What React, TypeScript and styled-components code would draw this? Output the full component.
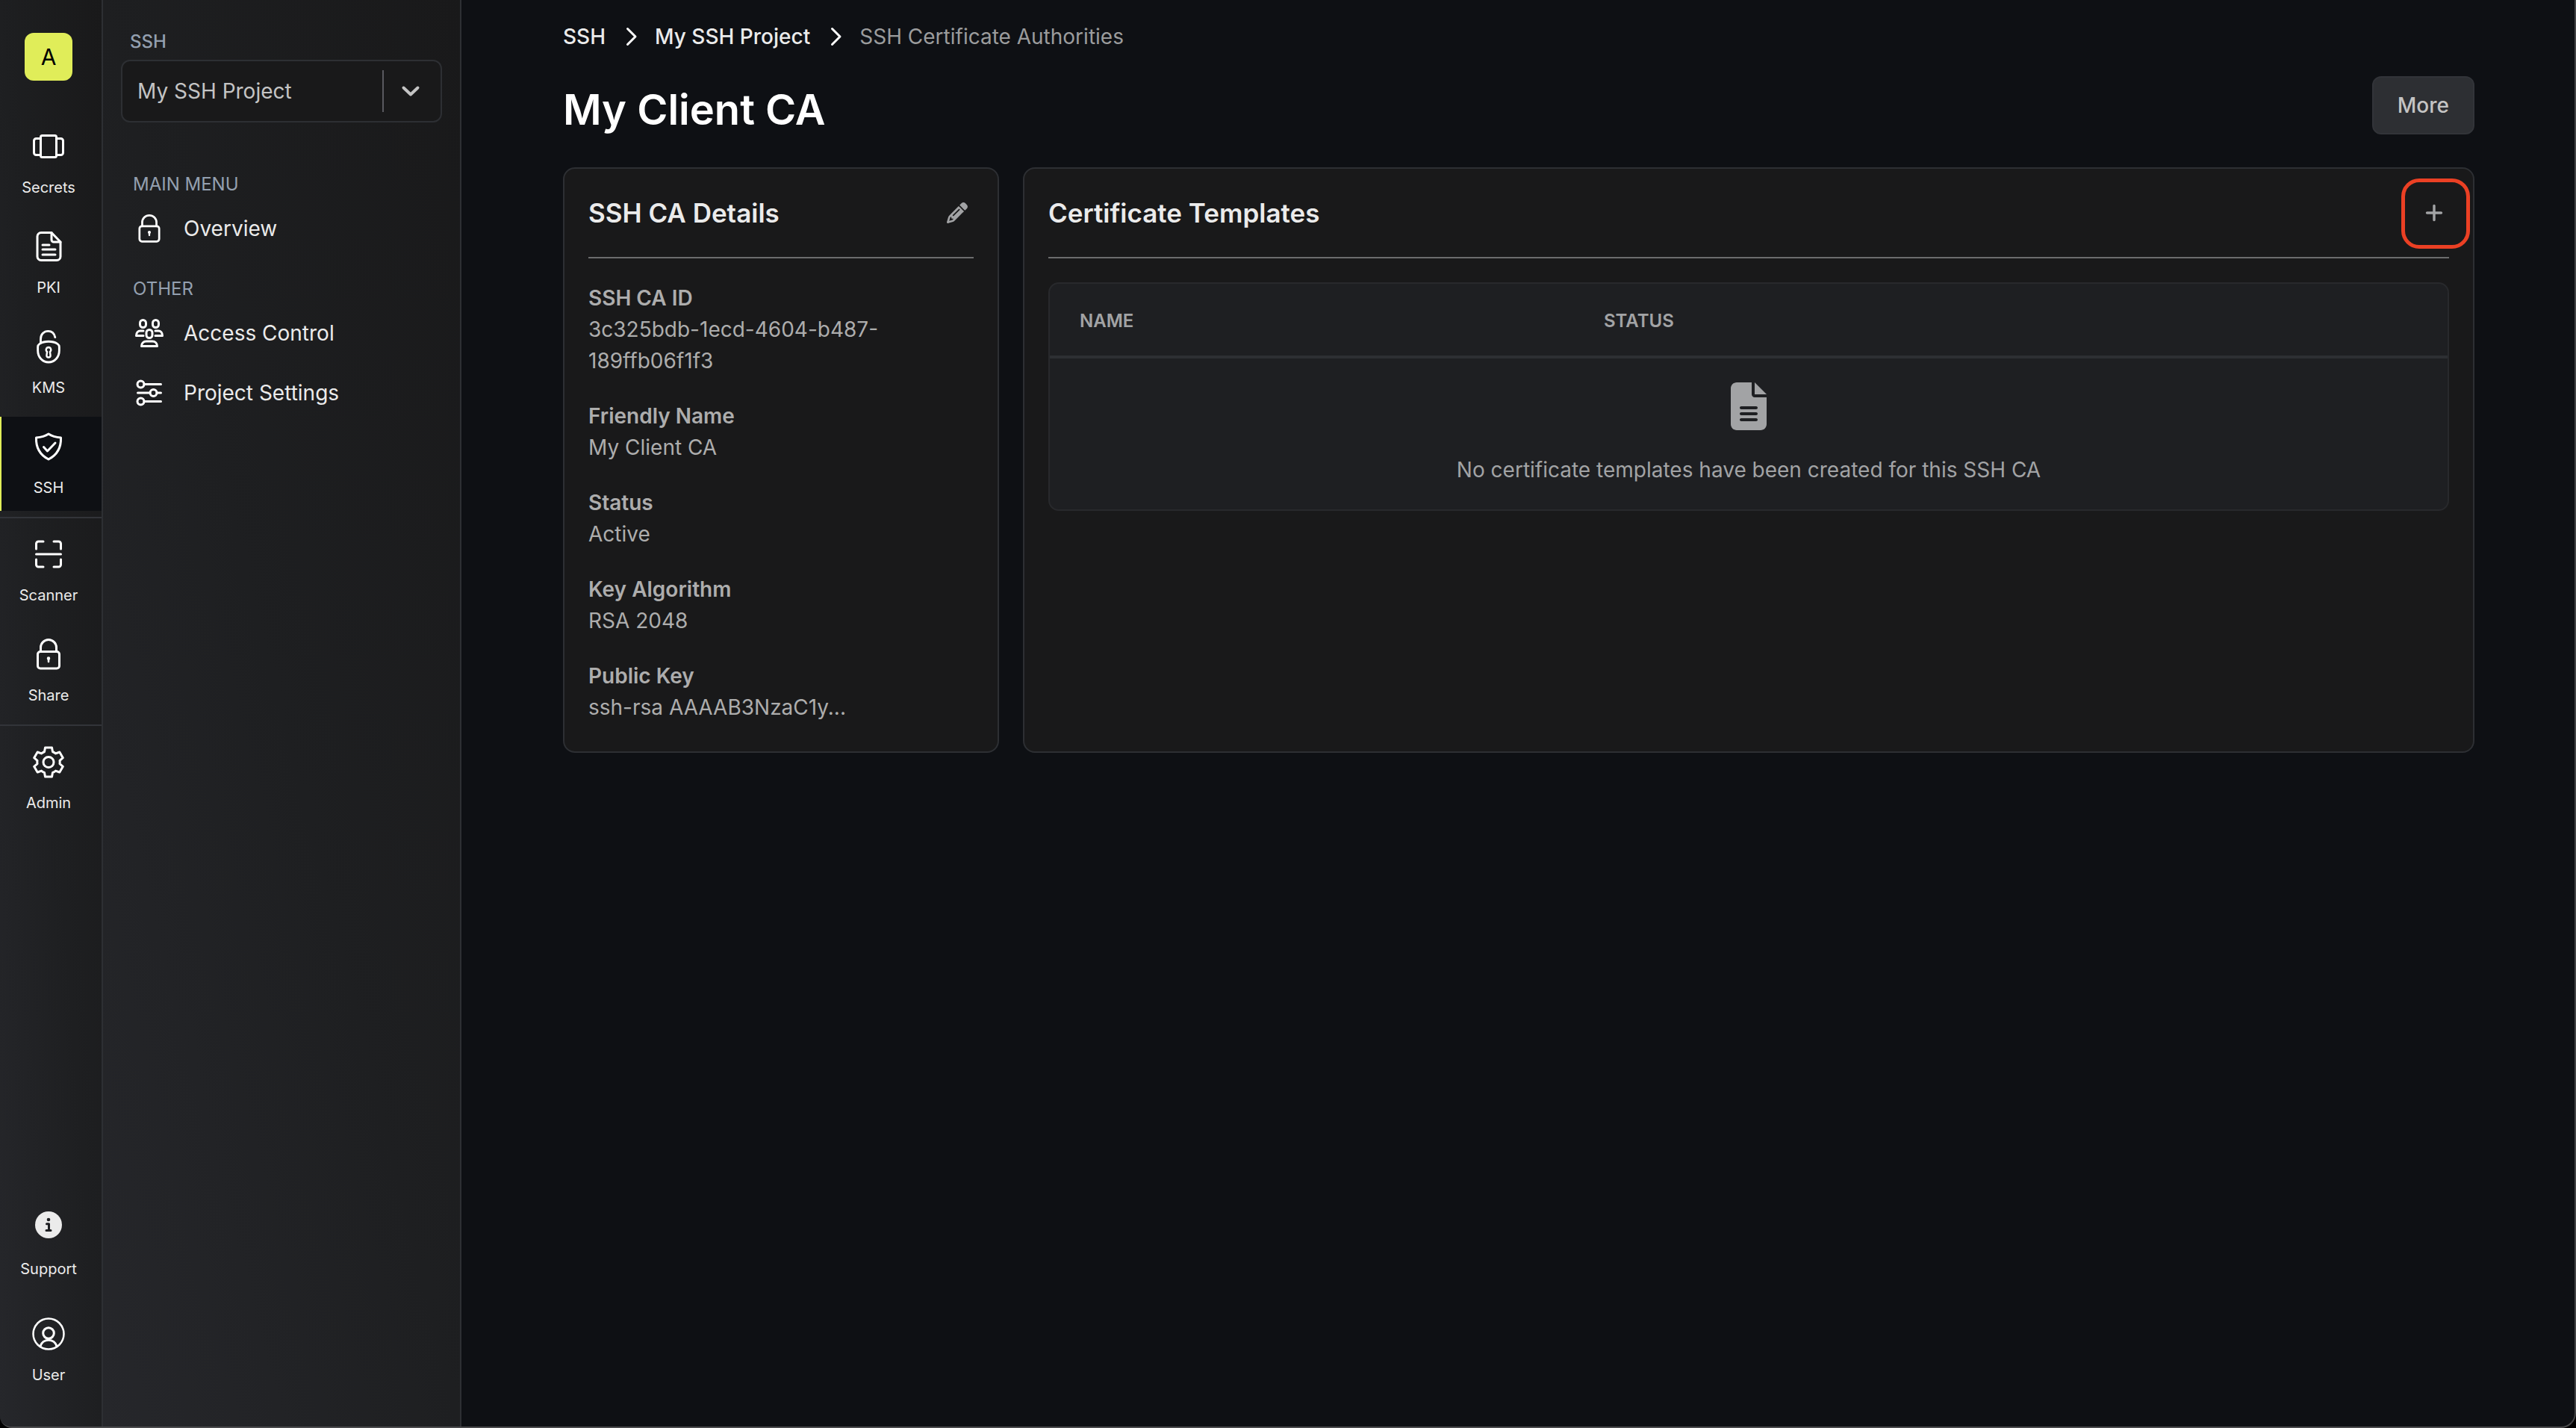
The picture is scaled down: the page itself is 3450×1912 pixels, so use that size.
import React from "react";
import styled, { createGlobalStyle, css } from "styled-components";
import { FaPencil, FaPlus, FaFileLines } from "react-icons/fa6";

const color = {
  page: "#0e1014",
  panel: "#19191a",
  table: "#1e1f22",
  line: "#2d2f33",
  rule: "#6b6c6d",
  text: "#ebebeb",
  soft: "#c4c4c4",
  muted: "#adadad",
  dim: "#a2a3a5",
  slate: "#94a0b0",
  lime: "#e0ed59",
  alert: "#eb4024",
};

const GlobalStyle = createGlobalStyle`
  *, *::before, *::after { box-sizing: border-box; }
  html { background: #000; }
  body {
    margin: 0;
    font-family: Inter, "Liberation Sans", sans-serif;
    font-size: 28px;
    line-height: 42px;
    color: ${color.text};
    -webkit-font-smoothing: antialiased;
  }
  h1, h2, dl, dd, ul, ol, p { margin: 0; padding: 0; }
  ul, ol { list-style: none; }
  button, select { font: inherit; color: inherit; }
  a { color: inherit; text-decoration: none; }
`;

const Window = styled.div`
  display: flex;
  min-height: 100vh;
  overflow: hidden;
  background: ${color.page};
  border-right: 2px solid #434345;
  border-bottom: 2px solid #4b4b4d;
  border-radius: 0 0 20px 16px;
`;

const gradient = css`
  background: linear-gradient(to top right, #26272b, #1e1f21 50%, #19191a);
`;

const Rail = styled.nav`
  ${gradient}
  flex: none;
  display: flex;
  flex-direction: column;
  gap: 8px;
  width: 138px;
  padding: 44px 0 38px;
  border-right: 2px solid ${color.line};
`;

const OrgBadge = styled.button`
  display: flex;
  align-items: center;
  justify-content: center;
  align-self: center;
  width: 64px;
  height: 64px;
  margin: 0 6px 40px 0;
  padding: 0;
  border: 0;
  border-radius: 12px;
  background: ${color.lime};
  color: #000;
  font-size: 30px;
`;

const RailItem = styled.a<{ $active?: boolean }>`
  display: flex;
  flex-direction: column;
  align-items: center;
  gap: 18px;
  height: 126px;
  padding: 18px 8px 0 0;
  font-size: 20px;
  line-height: 30px;
  border-left: 2px solid ${(p) => (p.$active ? color.lime : "transparent")};
  background: ${(p) => (p.$active ? color.page : "transparent")};
`;

const RailRule = styled.div`
  height: 2px;
  background: #323439;
`;

const RailSpacer = styled.div`
  flex: 1;
`;

const RailFooter = styled.div`
  display: flex;
  flex-direction: column;
  gap: 16px;
`;

const Icon = styled.svg<{ $size: number }>`
  flex: none;
  width: ${(p) => p.$size}px;
  height: ${(p) => p.$size}px;
  overflow: visible;
  fill: none;
  stroke: #fff;
  stroke-width: 3;
  stroke-linecap: round;
  stroke-linejoin: round;
`;

const Sidebar = styled.aside`
  ${gradient}
  flex: none;
  width: 480px;
  padding: 38px 24px;
  border-right: 2px solid ${color.line};
`;

const ProductLabel = styled.label`
  display: block;
  padding: 0 12px 6px;
  font-size: 24px;
  line-height: 36px;
  font-weight: 500;
  color: ${color.slate};
`;

const SelectBox = styled.div`
  display: flex;
  align-items: center;
  height: 84px;
  padding-right: 28px;
  border: 2px solid ${color.line};
  border-radius: 12px;
  background: ${color.panel};
`;

const Select = styled.select`
  flex: 1;
  min-width: 0;
  height: 100%;
  padding: 0 0 0 20px;
  border: 0;
  background: transparent;
  color: ${color.soft};
  appearance: none;
`;

const SelectRule = styled.span`
  width: 2px;
  height: 56px;
  margin-right: 24px;
  background: #59595f;
`;

const MenuTitle = styled.h2`
  height: 40px;
  padding-left: 16px;
  font-size: 24px;
  font-weight: 400;
  line-height: 42px;
  color: ${color.slate};
`;

const MenuGroup = styled.section`
  padding-top: 20px;

  &:first-of-type {
    padding-top: 62px;
  }
`;

const MenuLink = styled.a`
  display: flex;
  align-items: center;
  gap: 26px;
  height: 80px;
  padding-left: 18px;
`;

const Main = styled.main`
  flex: 1;
  min-width: 0;
  padding: 28px 48px 28px 50px;
`;

const Content = styled.div`
  width: 100%;
  max-width: 2560px;
  margin: 0 auto;
`;

const Crumbs = styled.ol`
  display: flex;
  align-items: center;
`;

const Crumb = styled.li<{ $current?: boolean }>`
  display: flex;
  align-items: center;
  font-weight: ${(p) => (p.$current ? 400 : 500)};
  color: ${(p) => (p.$current ? "#9b9c9d" : color.text)};
`;

const CrumbArrow = styled(Icon)`
  margin: 0 17px 0 21px;
`;

const PageHeader = styled.header`
  display: flex;
  align-items: flex-start;
  justify-content: space-between;
  padding: 32px 0;
`;

const PageTitle = styled.h1`
  font-size: 56px;
  line-height: 90px;
  font-weight: 600;
  color: #fff;
`;

const MoreButton = styled.button`
  height: 78px;
  padding: 0 32px;
  border: 2px solid #323439;
  border-radius: 12px;
  background: ${color.line};
  color: ${color.soft};
  font-weight: 500;
`;

const Columns = styled.div`
  display: grid;
  grid-template-columns: 584px minmax(0, 1fr);
  gap: 32px;
`;

const Card = styled.section`
  padding: 32px 32px 38px;
  border: 2px solid ${color.line};
  border-radius: 16px;
  background: ${color.panel};
`;

const CardHeader = styled.header`
  display: flex;
  align-items: center;
  justify-content: space-between;
  padding-bottom: 32px;
  margin-bottom: 32px;
  border-bottom: 2px solid ${color.rule};
`;

const CardTitle = styled.h2`
  font-size: 35px;
  line-height: 54px;
  font-weight: 600;
`;

const IconButton = styled.button`
  position: relative;
  display: flex;
  padding: 8px;
  border: 0;
  background: transparent;
  color: ${color.dim};
`;

const PlusIcon = styled(FaPlus)`
  width: 24px;
  height: 28px;
`;

const Highlight = styled.span`
  position: absolute;
  inset: -24px -28px -26px -24px;
  border: 5px solid ${color.alert};
  border-radius: 24px;
  pointer-events: none;
`;

const Details = styled.dl`
  display: flex;
  flex-direction: column;
  gap: 32px;
  color: ${color.muted};
`;

const DetailName = styled.dt`
  font-weight: 600;
`;

const TableFrame = styled.div`
  overflow: hidden;
  border: 2px solid #28292c;
  border-radius: 14px;
  background: ${color.table};
`;

const Table = styled.table`
  width: 100%;
  table-layout: fixed;
  border-collapse: separate;
  border-spacing: 0;
  color: ${color.dim};
`;

const HeadCell = styled.th<{ $width: string }>`
  width: ${(p) => p.$width};
  height: 100px;
  padding: 4px 40px 0;
  border-bottom: 4px solid ${color.line};
  font-size: 24px;
  font-weight: 600;
  text-align: left;
`;

const EmptyCell = styled.td`
  padding: 32px;
  text-align: center;
`;

const Empty = styled.div`
  display: flex;
  flex-direction: column;
  align-items: center;
  gap: 32px;
`;

const LockIcon = ({ size }: { size: number }) => (
  <Icon $size={size} viewBox="0 0 44 44" aria-hidden="true">
    <rect x="7.5" y="18.500" width="29" height="22.500" rx="3.500" />
    <path d="M11.500 18.500V13a10.500 10.500 0 0 1 21 0v5.500" />
    <circle cx="22" cy="27.500" r="1.500" fill="#fff" strokeWidth="1.500" />
    <path d="M22 28v4" strokeWidth="2.500" />
  </Icon>
);

const SecretsIcon = () => (
  <Icon $size={44} viewBox="0 0 44 44" aria-hidden="true">
    <rect x="11.500" y="7.500" width="21" height="29" rx="2" />
    <path d="M11.500 11.500H5.500a3 3 0 0 0-3 3v16a3 3 0 0 0 3 3h6M32.500 11.500h6a3 3 0 0 1 3 3v16a3 3 0 0 1-3 3h-6" />
  </Icon>
);

const DocumentIcon = () => (
  <Icon $size={44} viewBox="0 0 44 44" aria-hidden="true">
    <path d="M26 3.500H12a5 5 0 0 0-5 5v27a5 5 0 0 0 5 5h21a5 5 0 0 0 5-5V16z" />
    <path d="M26 3.500v9.500a3 3 0 0 0 3 3h9M14 20h9M14 26h17M14 33h17" />
  </Icon>
);

const KmsIcon = () => (
  <Icon $size={44} viewBox="1 1 46 46" aria-hidden="true">
    <path d="M24 17c5 0 9.500 1.300 12.500 3.200 1.500 1 2.500 2 2.500 4.300v5C39 39 32.500 46 24 46S9 39 9 29.500v-5c0-2.300 1-3.300 2.500-4.300C14.500 18.300 19 17 24 17z" />
    <path d="M13 19v-5.500C13 7 17.500 2.500 23.500 2.500c5 0 8.500 3.200 9.700 8.500" />
    <path d="M24 25a3.500 3.500 0 0 1 2 6.300l.7 5.200a2.700 2.700 0 0 1-5.400 0l.7-5.200a3.500 3.500 0 0 1 2-6.300z" strokeWidth="2.500" />
  </Icon>
);

const ShieldIcon = () => (
  <Icon $size={44} viewBox="0 0 44 44" aria-hidden="true">
    <path d="M22 5c4.500 3 10 4.500 16.500 5C39 22 34.500 32.500 22 39 9.500 32.500 5 22 5.500 10 12 9.500 17.500 8 22 5z" />
    <path d="M15.500 22.500l5 5.500L31 17" />
  </Icon>
);

const ScannerIcon = () => (
  <Icon $size={44} viewBox="0 0 44 44" aria-hidden="true">
    <path d="M5.500 15V8a3 3 0 0 1 3-3H15M29 5h6.500a3 3 0 0 1 3 3v7M38.500 29v7a3 3 0 0 1-3 3H29M15 39H8.500a3 3 0 0 1-3-3v-7M5.500 22h33" />
  </Icon>
);

const GearIcon = () => (
  <Icon $size={44} viewBox="0 0 44 44" aria-hidden="true">
    <path d="M17.500 3h9l1 5.500a14 14 0 0 1 4 2.400l5.300-1.900 4.500 7.700-4.300 3.600a14 14 0 0 1 0 4.400l4.300 3.600-4.500 7.700-5.300-1.900a14 14 0 0 1-4 2.400l-1 5.500h-9l-1-5.500a14 14 0 0 1-4-2.400l-5.300 1.900-4.500-7.700L7 24.700a14 14 0 0 1 0-4.400l-4.300-3.600L7.200 9l5.300 1.900a14 14 0 0 1 4-2.400z" />
    <circle cx="22" cy="22.500" r="7" />
  </Icon>
);

const InfoIcon = () => (
  <Icon $size={44} viewBox="0 0 44 44" aria-hidden="true">
    <circle cx="22" cy="18" r="18" fill="#ebebeb" stroke="none" />
    <circle cx="22" cy="11" r="2.300" fill="#1e1f22" stroke="none" />
    <path d="M19.500 16.800H22.500V25.500M19 25.500h6" stroke="#1e1f22" />
  </Icon>
);

const UserIcon = () => (
  <Icon $size={44} viewBox="0 0 44 44" aria-hidden="true">
    <circle cx="22" cy="22" r="20.500" strokeWidth="2.500" />
    <circle cx="22" cy="21" r="7.300" />
    <path d="M11 38.500c1.500-5 6-8.300 11-8.300s9.500 3.300 11 8.300" />
  </Icon>
);

const PeopleIcon = () => (
  <Icon $size={40} viewBox="0 0 40 40" aria-hidden="true">
    <rect x="7.500" y="2.500" width="8" height="10" rx="4" />
    <rect x="24.500" y="2.500" width="8" height="10" rx="4" />
    <rect x="16" y="15.500" width="8" height="11" rx="4" />
    <path d="M12 23.500H2.500c0-4 2.300-6.500 5.500-6.500h4M28 23.500h9.500c0-4-2.300-6.500-5.500-6.500h-4M9.500 37.500h21c0-4-2.800-6.500-6.500-6.500h-8c-3.700 0-6.500 2.500-6.500 6.500z" />
  </Icon>
);

const SlidersIcon = () => (
  <Icon $size={40} viewBox="0 0 40 40" aria-hidden="true">
    <circle cx="8.500" cy="8.500" r="4.500" />
    <circle cx="25.500" cy="20" r="4.500" />
    <circle cx="8.500" cy="31.500" r="4.500" />
    <path d="M13 8.500h22.500M4.500 20H21M30 20h5.500M13 31.500h22.500" />
  </Icon>
);

const RightArrow = () => (
  <CrumbArrow $size={28} viewBox="0 0 28 28" aria-hidden="true">
    <path d="M8.500 3.500L19 14 8.500 24.500" />
  </CrumbArrow>
);

const details = [
  ["SSH CA ID", "3c325bdb-1ecd-4604-b487-189ffb06f1f3"],
  ["Friendly Name", "My Client CA"],
  ["Status", "Active"],
  ["Key Algorithm", "RSA 2048"],
  ["Public Key", "ssh-rsa AAAAB3NzaC1y..."],
];

export default function App() {
  return (
    <>
      <GlobalStyle />
      <Window>
        <Rail aria-label="Products">
          <OrgBadge type="button">A</OrgBadge>
          <RailItem href="#secrets"><SecretsIcon />Secrets</RailItem>
          <RailItem href="#pki"><DocumentIcon />PKI</RailItem>
          <RailItem href="#kms"><KmsIcon />KMS</RailItem>
          <RailItem href="#ssh" $active aria-current="page"><ShieldIcon />SSH</RailItem>
          <RailRule />
          <RailItem href="#scanner"><ScannerIcon />Scanner</RailItem>
          <RailItem href="#share"><LockIcon size={44} />Share</RailItem>
          <RailRule />
          <RailItem href="#admin"><GearIcon />Admin</RailItem>
          <RailSpacer />
          <RailFooter>
            <RailItem href="#support"><InfoIcon />Support</RailItem>
            <RailItem href="#user"><UserIcon />User</RailItem>
          </RailFooter>
        </Rail>

        <Sidebar>
          <ProductLabel htmlFor="project">SSH</ProductLabel>
          <SelectBox>
            <Select id="project" defaultValue="ssh">
              <option value="ssh">My SSH Project</option>
            </Select>
            <SelectRule />
            <Icon $size={24} viewBox="0 0 24 24" aria-hidden="true">
              <path d="M2.500 7.500l9.500 9 9.500-9" stroke="#c4c4c4" strokeWidth="4" />
            </Icon>
          </SelectBox>
          <MenuGroup>
            <MenuTitle>MAIN MENU</MenuTitle>
            <MenuLink href="#overview"><LockIcon size={40} />Overview</MenuLink>
          </MenuGroup>
          <MenuGroup>
            <MenuTitle>OTHER</MenuTitle>
            <MenuLink href="#access"><PeopleIcon />Access Control</MenuLink>
            <MenuLink href="#settings"><SlidersIcon />Project Settings</MenuLink>
          </MenuGroup>
        </Sidebar>

        <Main>
          <Content>
            <nav aria-label="Breadcrumb">
              <Crumbs>
                <Crumb><a href="#ssh">SSH</a><RightArrow /></Crumb>
                <Crumb><a href="#project-home">My SSH Project</a><RightArrow /></Crumb>
                <Crumb $current aria-current="page">SSH Certificate Authorities</Crumb>
              </Crumbs>
            </nav>
            <PageHeader>
              <PageTitle>My Client CA</PageTitle>
              <MoreButton type="button">More</MoreButton>
            </PageHeader>
            <Columns>
              <Card>
                <CardHeader>
                  <CardTitle>SSH CA Details</CardTitle>
                  <IconButton type="button" aria-label="Edit details">
                    <FaPencil size={28} />
                  </IconButton>
                </CardHeader>
                <Details>
                  {details.map(([name, value]) => (
                    <div key={name}>
                      <DetailName>{name}</DetailName>
                      <dd>{value}</dd>
                    </div>
                  ))}
                </Details>
              </Card>
              <Card>
                <CardHeader>
                  <CardTitle>Certificate Templates</CardTitle>
                  <IconButton type="button" aria-label="Add certificate template">
                    <PlusIcon />
                    <Highlight />
                  </IconButton>
                </CardHeader>
                <TableFrame>
                  <Table>
                    <thead>
                      <tr>
                        <HeadCell $width="37.5%" scope="col">NAME</HeadCell>
                        <HeadCell $width="37.5%" scope="col">STATUS</HeadCell>
                        <HeadCell $width="25%" scope="col" aria-label="Actions" />
                      </tr>
                    </thead>
                    <tbody>
                      <tr>
                        <EmptyCell colSpan={3}>
                          <Empty>
                            <FaFileLines size={64} />
                            <p>No certificate templates have been created for this SSH CA</p>
                          </Empty>
                        </EmptyCell>
                      </tr>
                    </tbody>
                  </Table>
                </TableFrame>
              </Card>
            </Columns>
          </Content>
        </Main>
      </Window>
    </>
  );
}
